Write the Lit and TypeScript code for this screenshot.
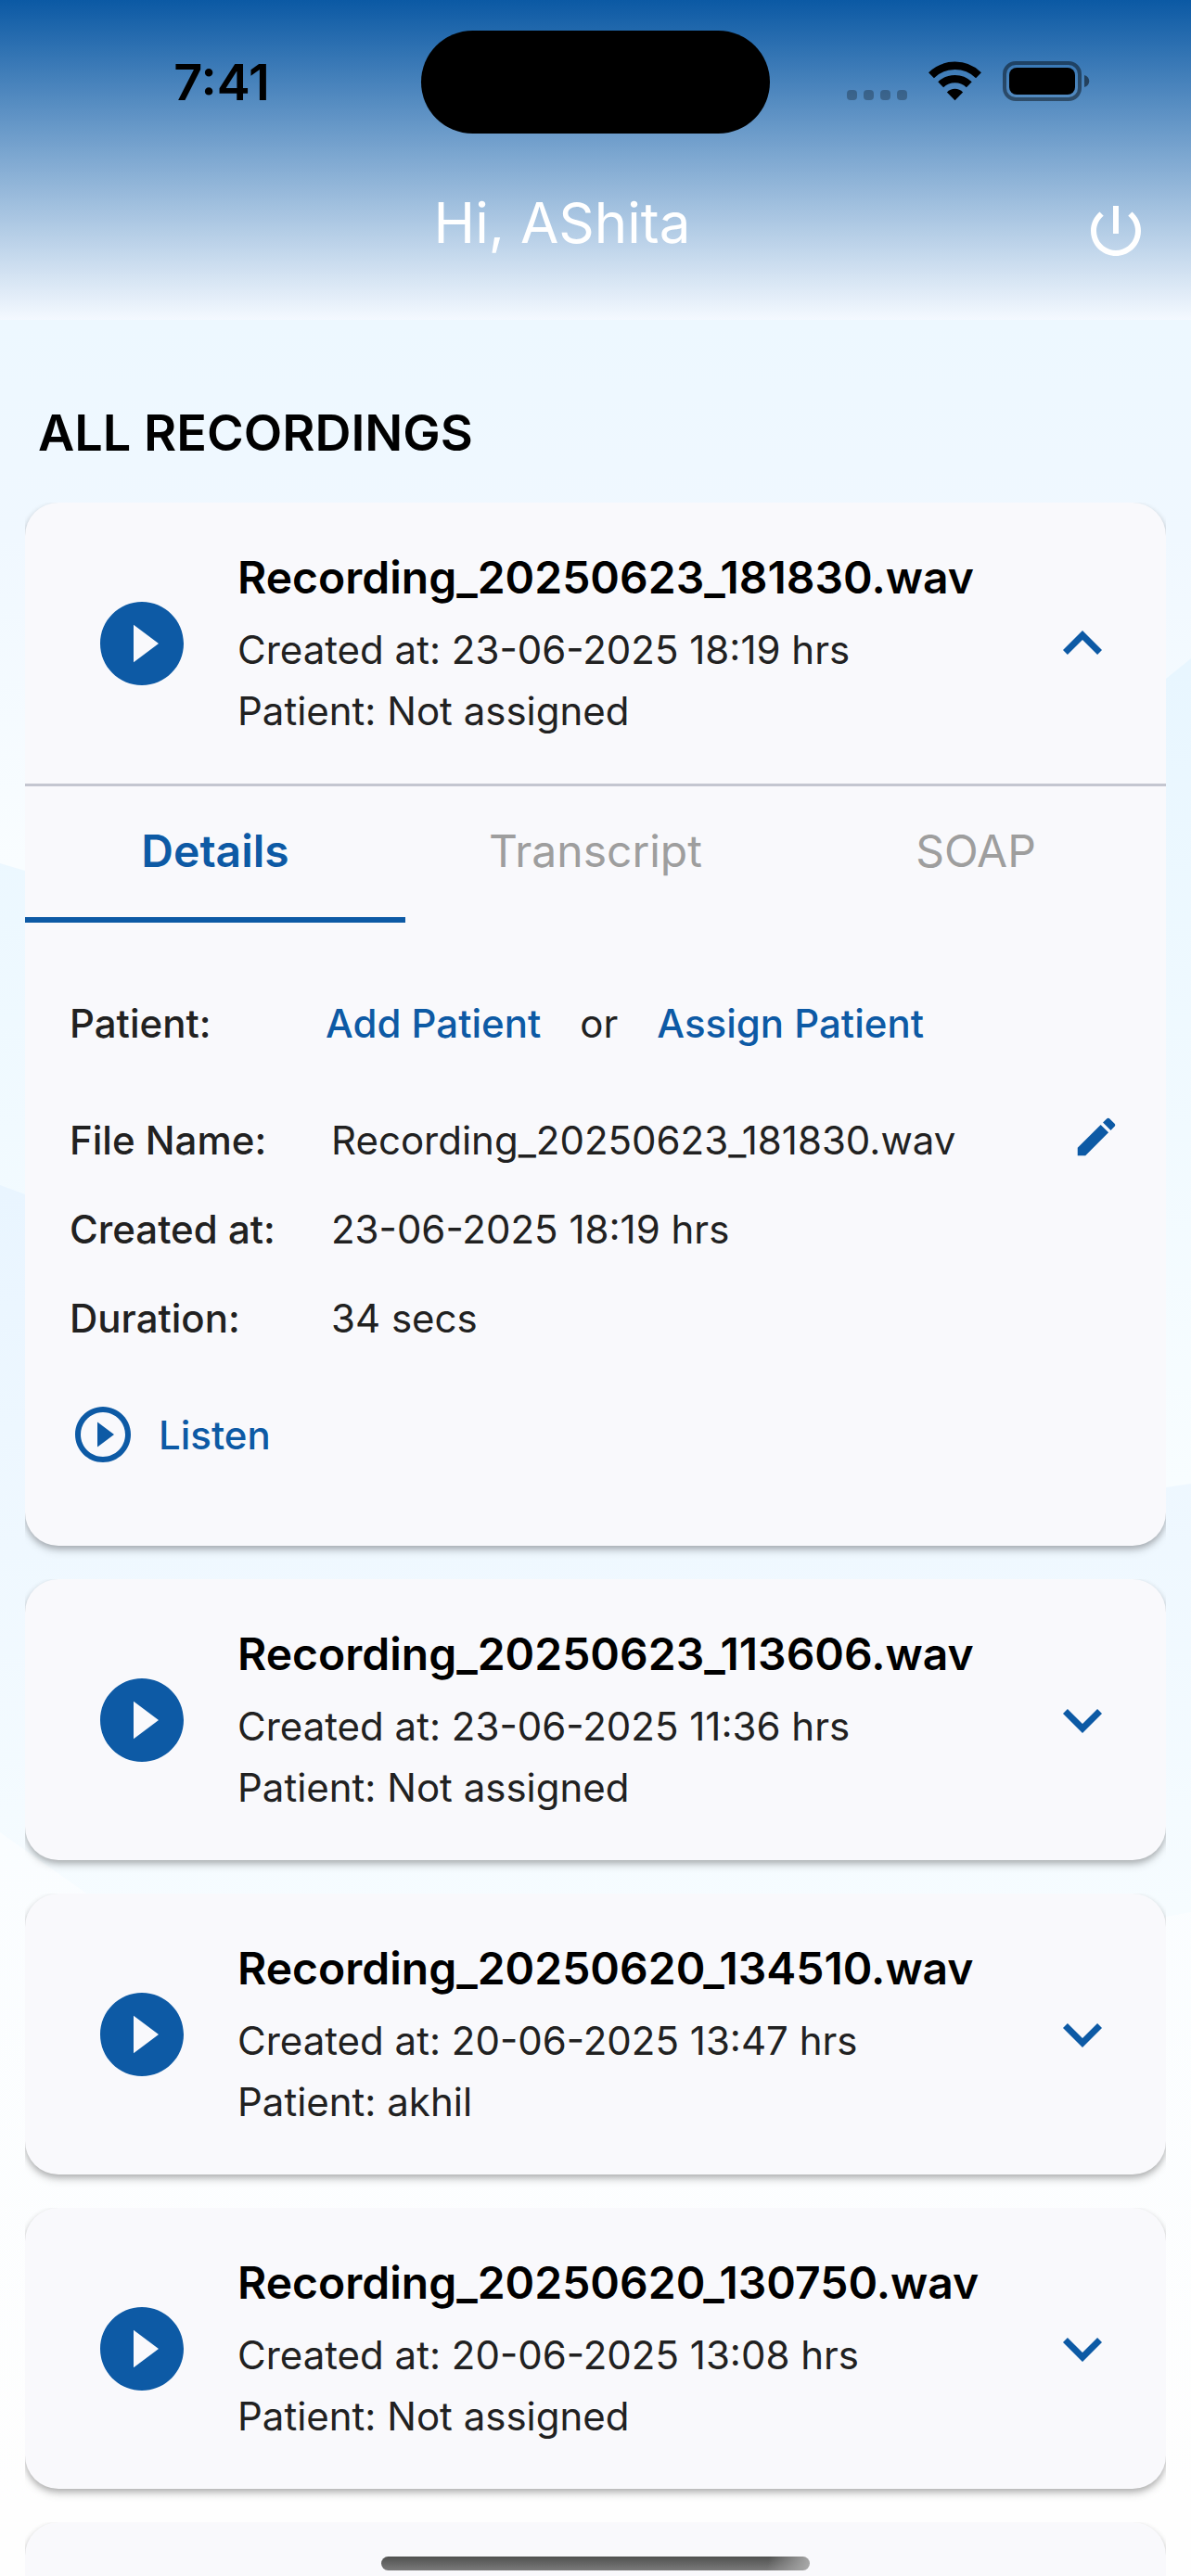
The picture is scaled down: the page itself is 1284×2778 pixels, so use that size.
import { LitElement, html, svg, css, nothing } from "lit";
import { customElement, property, state } from "lit/decorators.js";

interface Recording {
  file: string;
  created: string;
  patient: string;
  duration: string;
}

const RECORDINGS: Recording[] = [
  { file: "Recording_20250623_181830.wav", created: "23-06-2025 18:19 hrs", patient: "Not assigned", duration: "34 secs" },
  { file: "Recording_20250623_113606.wav", created: "23-06-2025 11:36 hrs", patient: "Not assigned", duration: "12 secs" },
  { file: "Recording_20250620_134510.wav", created: "20-06-2025 13:47 hrs", patient: "akhil", duration: "48 secs" },
  { file: "Recording_20250620_130750.wav", created: "20-06-2025 13:08 hrs", patient: "Not assigned", duration: "21 secs" },
];

const TABS = ["Details", "Transcript", "SOAP"];

const PATHS = {
  power: "M13 3h-2v10h2V3zm4.83 2.17l-1.42 1.42C17.99 7.86 19 9.81 19 12c0 3.87-3.13 7-7 7s-7-3.13-7-7c0-2.19 1.01-4.14 2.58-5.42L6.17 5.17C4.23 6.82 3 9.26 3 12c0 4.97 4.03 9 9 9s9-4.03 9-9c0-2.74-1.23-5.18-3.17-6.83z",
  play: "M12 2C6.48 2 2 6.48 2 12s4.48 10 10 10 10-4.48 10-10S17.52 2 12 2zm-2 14.5v-9l6 4.5-6 4.5z",
  playOutline: "M10 16.5l6-4.5-6-4.5v9zM12 2C6.48 2 2 6.48 2 12s4.48 10 10 10 10-4.48 10-10S17.52 2 12 2zm0 18c-4.41 0-8-3.59-8-8s3.59-8 8-8 8 3.59 8 8-3.59 8-8 8z",
  less: "M12 8l-6 6 1.41 1.41L12 10.83l4.59 4.58L18 14z",
  more: "M16.59 8.59L12 13.17 7.41 8.59 6 10l6 6 6-6z",
  edit: "M3 17.25V21h3.75L17.81 9.94l-3.75-3.75L3 17.25zM20.71 7.04c.39-.39.39-1.02 0-1.41l-2.34-2.34c-.39-.39-1.02-.39-1.41 0l-1.83 1.83 3.75 3.75 1.83-1.83z",
};

const icon = (name: keyof typeof PATHS, size: string) => html`
  <svg class="icon ${size}" viewBox="0 0 24 24" aria-hidden="true">${svg`<path d=${PATHS[name]} />`}</svg>
`;

const shared = css`
  * { box-sizing: border-box; }
  button {
    margin: 0;
    padding: 0;
    border: 0;
    background: none;
    color: inherit;
    font: inherit;
    text-align: left;
    cursor: pointer;
  }
  .icon { display: block; flex: none; fill: currentColor; }
  .small { width: 54px; height: 54px; }
  .medium { width: 72px; height: 72px; }
  .large { width: 84px; height: 84px; }
  .huge { width: 108px; height: 108px; }
`;

@customElement("status-bar")
export class StatusBar extends LitElement {
  static styles = css`
    :host {
      display: grid;
      grid-template-columns: 1fr 376px 1fr;
      align-items: center;
      padding-top: 33px;
      color: #000;
    }
    .time {
      padding-left: 24px;
      text-align: center;
      font-size: 54px;
      line-height: 64px;
      font-weight: 600;
    }
    .island { height: 111px; border-radius: 56px; background: #000; }
    .status { display: flex; align-items: center; padding: 0 0 4px 83px; }
    .glyphs { width: 262px; height: 44px; }
  `;

  render() {
    return html`
      <div class="time">7:41</div>
      <div class="island"></div>
      <div class="status">
        <svg class="glyphs" viewBox="0 0 262 44" aria-hidden="true">
          <g fill="#000" fill-opacity="0.27">
            <rect x="0" y="32" width="11" height="11" rx="4" />
            <rect x="18" y="32" width="11" height="11" rx="4" />
            <rect x="36" y="32" width="11" height="11" rx="4" />
            <rect x="54" y="32" width="11" height="11" rx="4" />
          </g>
          <g fill="none" stroke="#000" stroke-width="8.4">
            <path d="M91 16.200a36.500 36.500 0 0 1 51 0" />
            <path d="M101.200 26.300a22 22 0 0 1 30.600 0" />
          </g>
          <path d="M116.500 43.200l-8.600-8.800a12.200 12.200 0 0 1 17.200 0z" />
          <rect x="170" y="3" width="81" height="39" rx="12" fill="none" stroke="#000" stroke-opacity="0.45" stroke-width="4" />
          <rect x="175" y="8" width="71" height="29" rx="8" />
          <path d="M256 16c7 2 7 11 0 13z" fill-opacity="0.5" />
        </svg>
      </div>
    `;
  }
}

@customElement("recording-card")
export class RecordingCard extends LitElement {
  static styles = [
    shared,
    css`
      :host { display: block; overflow: hidden; padding-bottom: 36px; }
      .card {
        min-height: 303px;
        border-radius: 36px;
        background: #f9f9fc;
        box-shadow: 0 3px 6px rgba(0, 0, 0, 0.22), 0 6px 10px rgba(0, 0, 0, 0.12);
      }
      .head { display: flex; align-items: center; min-height: 303px; padding: 0 48px 0 72px; }
      .play, .toggle, .add, .listen, .edit { color: #0d5aa5; }
      .texts { flex: 1; padding-left: 49px; }
      .name { margin: 0 0 9px; font-size: 48px; line-height: 72px; font-weight: 600; color: #000; }
      .meta { margin: 0; font-size: 42px; line-height: 66px; color: #212121; }
      .tabs { display: grid; grid-template-columns: repeat(3, 1fr); border-top: 3px solid #c4c6d0; }
      .tab {
        height: 147px;
        padding-bottom: 3px;
        border-bottom: 6px solid transparent;
        text-align: center;
        font-size: 48px;
        color: #9e9e9e;
      }
      .tab.active { border-color: #0d5aa5; font-weight: 600; color: #0d5aa5; }
      .panel { padding: 60px 48px 84px; font-size: 42px; color: #212121; }
      .row { display: flex; align-items: center; min-height: 96px; }
      .row.first { min-height: 126px; padding-bottom: 30px; }
      .label { width: 282px; margin: 0; font-weight: 500; }
      .value { flex: 1; margin: 0; }
      .choices { display: flex; flex: 1; gap: 42px; margin: 0 0 0 -6px; }
      .add { font-weight: 500; }
      dl { margin: 0; }
      .action { display: flex; margin: 0; padding-bottom: 6px; }
      .listen { display: flex; align-items: center; gap: 24px; margin-top: 42px; font-weight: 500; }
    `,
  ];

  @property({ attribute: false }) recording?: Recording;
  @property({ type: Boolean }) open = false;
  @state() private tab = 0;

  render() {
    const r = this.recording;
    if (!r) return html`<div class="card" aria-busy="true"></div>`;
    return html`
      <article class="card">
        <div class="head">
          <button class="play" aria-label="Play ${r.file}">${icon("play", "huge")}</button>
          <div class="texts">
            <h2 class="name">${r.file}</h2>
            <p class="meta">Created at: ${r.created}</p>
            <p class="meta">Patient: ${r.patient}</p>
          </div>
          <button
            class="toggle"
            aria-label="Show details"
            aria-expanded=${this.open ? "true" : "false"}
            @click=${() => (this.open = !this.open)}
          >
            ${icon(this.open ? "less" : "more", "large")}
          </button>
        </div>
        ${this.open ? this.renderBody(r) : nothing}
      </article>
    `;
  }

  private renderBody(r: Recording) {
    return html`
      <div class="tabs" role="tablist">
        ${TABS.map(
          (label, i) => html`
            <button
              class="tab ${i === this.tab ? "active" : ""}"
              role="tab"
              aria-selected=${i === this.tab ? "true" : "false"}
              @click=${() => (this.tab = i)}
            >
              ${label}
            </button>
          `,
        )}
      </div>
      ${this.tab === 0 ? this.renderDetails(r) : nothing}
    `;
  }

  private renderDetails(r: Recording) {
    return html`
      <div class="panel" role="tabpanel">
        <dl>
          <div class="row first">
            <dt class="label">Patient:</dt>
            <dd class="choices">
              <button class="add">Add Patient</button>
              <span>or</span>
              <button class="add">Assign Patient</button>
            </dd>
          </div>
          <div class="row">
            <dt class="label">File Name:</dt>
            <dd class="value">${r.file}</dd>
            <dd class="action"><button class="edit" aria-label="Rename file">${icon("edit", "small")}</button></dd>
          </div>
          <div class="row">
            <dt class="label">Created at:</dt>
            <dd class="value">${r.created}</dd>
          </div>
          <div class="row">
            <dt class="label">Duration:</dt>
            <dd class="value">${r.duration}</dd>
          </div>
        </dl>
        <button class="listen">${icon("playOutline", "medium")}Listen</button>
      </div>
    `;
  }
}

@customElement("app-root")
export class AppRoot extends LitElement {
  static styles = [
    shared,
    css`
      :host {
        display: block;
        position: relative;
        z-index: 0;
        height: 100vh;
        overflow: hidden;
        background: #fefefe;
        font-family: Inter, "Liberation Sans", sans-serif;
      }
      .waves { position: absolute; inset: 0; z-index: -1; width: 100%; height: 100%; }
      .top { height: 345px; background: linear-gradient(#0b59a4, #f4f9ff); }
      .bar {
        display: grid;
        grid-template-columns: 1fr 72px;
        align-items: end;
        padding: 60px 45px 0;
        color: #fff;
      }
      .hello { margin: 0; padding-bottom: 9px; text-align: center; font-size: 60px; line-height: 72px; font-weight: 400; }
      .title { margin: 0; padding: 84px 41px 38px; font-size: 54px; line-height: 75px; font-weight: 600; color: #000; }
      .list { padding: 0 27px; }
      .home {
        position: absolute;
        left: 50%;
        bottom: 6px;
        width: 462px;
        height: 15px;
        margin-left: -231px;
        border-radius: 8px;
        background: linear-gradient(100deg, transparent 90%, #aaa), linear-gradient(#505150, #7a7a7a);
      }
    `,
  ];

  render() {
    return html`
      <svg class="waves" viewBox="0 0 1284 2778" preserveAspectRatio="none" aria-hidden="true">
        <defs>
          <linearGradient id="a" x1="0" y1="345" x2="0" y2="930" gradientUnits="userSpaceOnUse">
            <stop offset="0" stop-color="#edf8ff" />
            <stop offset="0.4" stop-color="#f0f8ff" />
            <stop offset="1" stop-color="#f9fdff" />
          </linearGradient>
          <linearGradient id="b" x1="0" y1="720" x2="0" y2="1600" gradientUnits="userSpaceOnUse">
            <stop offset="0" stop-color="#e8f6ff" />
            <stop offset="1" stop-color="#f8fdff" />
          </linearGradient>
          <linearGradient id="c" x1="0" y1="1280" x2="0" y2="2060" gradientUnits="userSpaceOnUse">
            <stop offset="0" stop-color="#e9f5ff" />
            <stop offset="0.5" stop-color="#eff8ff" />
            <stop offset="1" stop-color="#f6fcff" />
          </linearGradient>
          <linearGradient id="d" x1="0" y1="1980" x2="0" y2="2700" gradientUnits="userSpaceOnUse">
            <stop offset="0" stop-color="#fafdff" />
            <stop offset="1" stop-color="#fefefe" />
          </linearGradient>
        </defs>
        <path fill="url(#a)" d="M0 0H1284V1000H0z" />
        <path fill="url(#b)" d="M0 931L27 939C400 1050 900 1050 1257 732L1284 710V1700H0z" />
        <path fill="url(#c)" d="M0 1278L27 1288C400 1420 800 1680 1257 1604L1284 1600V2100H0z" />
        <path fill="url(#d)" d="M0 1976L92 2041C300 2200 900 2120 1257 2067L1284 2062V2778H0z" />
      </svg>
      <header class="top">
        <status-bar></status-bar>
        <div class="bar">
          <p class="hello">Hi, AShita</p>
          <button aria-label="Log out">${icon("power", "medium")}</button>
        </div>
      </header>
      <main>
        <h1 class="title">ALL RECORDINGS</h1>
        <div class="list">
          ${RECORDINGS.map((r, i) => html`<recording-card .recording=${r} ?open=${i === 0}></recording-card>`)}
          <recording-card></recording-card>
        </div>
      </main>
      <div class="home"></div>
    `;
  }
}
